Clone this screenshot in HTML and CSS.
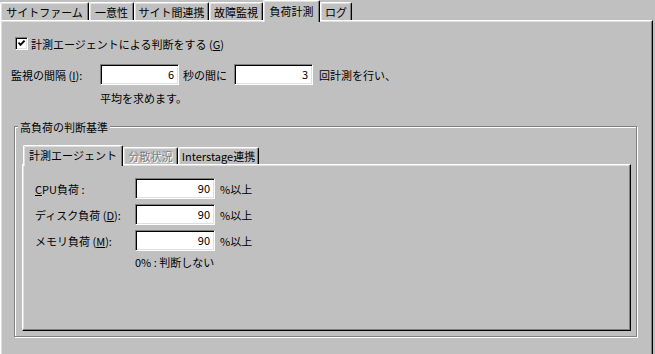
FILE: index.html
```html
<!DOCTYPE html>
<html lang="ja">
<head>
<meta charset="utf-8">
<title>負荷計測</title>
<link rel="stylesheet" href="styles.css">
</head>
<body>
<div class="tabs">
  <div class="tab t1">サイトファーム</div>
  <div class="tab t2">一意性</div>
  <div class="tab t3">サイト間連携</div>
  <div class="tab t4">故障監視</div>
  <div class="tab t5 active">負荷計測</div>
  <div class="tab t6">ログ</div>
</div>
<div class="pane">
  <div class="check-row">
    <span class="checkbox"><svg width="7" height="7" viewBox="0 0 7 7"><path d="M0.5 2.5 L2.5 4.8 L6.5 0.6" fill="none" stroke="#000" stroke-width="1.8"/></svg></span>
    <span class="check-label">計測エージェントによる判断をする (<u>G</u>)</span>
  </div>
  <div class="interval-row">
    <span class="lbl-interval">監視の間隔 (<u>I</u>):</span>
    <span class="field">6</span>
    <span class="mid">秒の間に</span>
    <span class="field">3</span>
    <span class="tail">回計測を行い、</span>
  </div>
  <div class="note">平均を求めます。</div>
  <div class="group">
    <span class="group-title">高負荷の判断基準</span>
    <div class="itabs">
      <div class="itab active w1">計測エージェント</div>
      <div class="itab disabled w2">分散状況</div>
      <div class="itab w3">Interstage連携</div>
    </div>
    <div class="ipane">
      <div class="crow">
        <span class="clabel"><u>C</u>PU負荷 :</span>
        <span class="field cfield">90</span>
        <span class="unit">%以上</span>
      </div>
      <div class="crow">
        <span class="clabel">ディスク負荷 (<u>D</u>):</span>
        <span class="field cfield">90</span>
        <span class="unit">%以上</span>
      </div>
      <div class="crow last">
        <span class="clabel">メモリ負荷 (<u>M</u>):</span>
        <span class="field cfield">90</span>
        <span class="unit">%以上</span>
      </div>
      <div class="cnote">0% : 判断しない</div>
    </div>
  </div>
</div>
</body>
</html>
```
FILE: styles.css
```css
* { box-sizing: border-box; }
html, body { margin: 0; padding: 0; }
body {
  width: 655px;
  height: 354px;
  overflow: hidden;
  background: #c0c0c0;
  color: #000;
  font-family: "Noto Sans CJK JP", "Noto Sans", sans-serif;
  font-size: 11px;
  line-height: 14px;
}
u { text-decoration: underline; text-underline-offset: 1px; }

/* main tab strip */
.tabs {
  display: flex;
  align-items: flex-end;
  height: 20px;
  position: relative;
  z-index: 1;
}
.tab {
  height: 18px;
  background: #c0c0c0;
  border-top: 1px solid #fff;
  border-left: 1px solid #fff;
  border-right: 1px solid #000;
  border-top-left-radius: 2px;
  border-top-right-radius: 2px;
  box-shadow: inset -1px 0 0 #808080, inset 1px 1px 0 #dfdfdf;
  display: flex;
  align-items: center;
  justify-content: center;
  white-space: nowrap;
}
.tab.active {
  height: 22px;
  margin-bottom: -2px;
  padding-bottom: 2px;
  box-shadow: inset -1px 0 0 #808080, inset 1px 1px 0 #dfdfdf;
}
.t1 { width: 89px; }
.t2 { width: 45px; }
.t3 { width: 75px; }
.t4 { width: 54px; }
.t5 { width: 57px; }
.t6 { width: 32px; }

/* main pane */
.pane {
  width: 653px;
  height: 340px;
  border-top: 1px solid #fff;
  border-left: 1px solid #fff;
  border-right: 1px solid #000;
  box-shadow: inset -1px 0 0 #808080, inset 1px 1px 0 #dfdfdf;
  padding: 16px 0 0 10px;
}

.check-row {
  display: flex;
  align-items: center;
  height: 13px;
  margin-left: 4px;
}
.checkbox {
  width: 13px;
  height: 13px;
  background: #fff;
  border: 1px solid;
  border-color: #808080 #fff #fff #808080;
  box-shadow: inset 1px 1px 0 #000, inset -1px -1px 0 #dfdfdf;
  display: flex;
  align-items: center;
  justify-content: center;
}
.checkbox svg { display: block; }
.check-label { margin-left: 3px; white-space: nowrap; }

.interval-row {
  display: flex;
  align-items: center;
  height: 21px;
  margin-top: 14px;
  white-space: nowrap;
}
.lbl-interval { width: 89px; }
.field {
  display: block;
  width: 79px;
  height: 21px;
  background: #fff;
  border: 1px solid;
  border-color: #808080 #fff #fff #808080;
  box-shadow: inset 1px 1px 0 #000, inset -1px -1px 0 #dfdfdf;
  text-align: right;
  padding-right: 4px;
  line-height: 19px;
}
.mid { width: 55px; padding-left: 4px; }
.tail { margin-left: 6px; }
.note { margin: 6px 0 0 89px; }

/* group box */
.group {
  position: relative;
  width: 623px;
  height: 211px;
  margin: 21px 0 0 3px;
  border: 1px solid #808080;
  box-shadow: 1px 1px 0 #fff, inset 1px 1px 0 #fff;
  padding: 18px 5px 5px 7px;
}
.group-title {
  position: absolute;
  left: 3px;
  top: -7px;
  padding: 0 2px;
  background: #c0c0c0;
  white-space: nowrap;
}

.itabs {
  display: flex;
  align-items: flex-end;
  height: 19px;
  padding-left: 1px;
  position: relative;
  z-index: 1;
}
.itab {
  height: 17px;
  background: #c0c0c0;
  border-top: 1px solid #fff;
  border-left: 1px solid #fff;
  border-right: 1px solid #000;
  border-top-left-radius: 2px;
  border-top-right-radius: 2px;
  box-shadow: inset -1px 0 0 #808080, inset 1px 1px 0 #dfdfdf;
  display: flex;
  align-items: center;
  justify-content: center;
  white-space: nowrap;
}
.itab.active {
  height: 21px;
  margin-bottom: -2px;
  padding-bottom: 2px;
}
.itab.disabled {
  color: #808080;
  text-shadow: 1px 1px 0 #fff;
}
.w1 { width: 100px; }
.w2 { width: 55px; }
.w3 { width: 81px; }

.ipane {
  width: 609px;
  height: 167px;
  border: 1px solid;
  border-color: #fff #000 #000 #fff;
  box-shadow: inset -1px -1px 0 #808080, inset 1px 1px 0 #dfdfdf;
  padding: 13px 0 0 12px;
}
.crow {
  display: flex;
  align-items: center;
  height: 21px;
  margin-bottom: 5px;
  white-space: nowrap;
}
.crow.last { margin-bottom: 0; }
.clabel { width: 100px; }
.cfield { width: 80px; }
.unit { margin-left: 5px; }
.cnote { margin: 4px 0 0 100px; white-space: nowrap; }
```
